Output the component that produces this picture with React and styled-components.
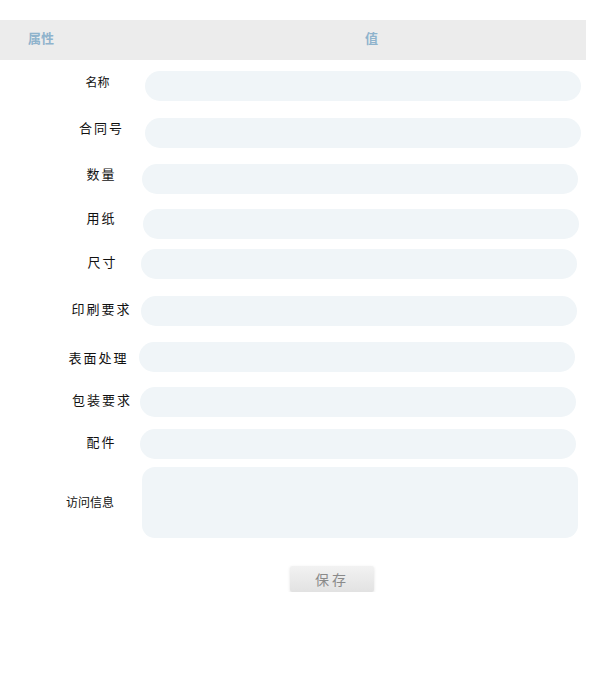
import styled, { createGlobalStyle } from 'styled-components';

const GlobalStyle = createGlobalStyle`
    body{
        margin:0;
        background:#fff;
        font-family:"Noto Sans CJK SC","Noto Sans",sans-serif;
    }
`

const Page = styled.div`
    width:586px;
    padding-top:20px;
`

const Header = styled.div`
    display:flex;
    align-items:center;
    height:40px;
    padding-bottom:5px;
    box-sizing:border-box;
    background:#ececec;
    font-size:13px;
    font-weight:bold;
    color:#8fb3cc;
`

const HeadCell = styled.div`
    width:${p=>p.$w}px;
    padding-left:${p=>p.$pad}px;
    box-sizing:border-box;
`

const Row = styled.div`
    display:flex;
    align-items:${p=>p.$center?"center":"flex-start"};
    margin-top:${p=>p.$top}px;
`

const Label = styled.div`
    width:140px;
    padding-left:${p=>p.$indent}px;
    padding-top:${p=>p.$drop}px;
    padding-bottom:${p=>p.$center?3:0}px;
    box-sizing:border-box;
    text-align:center;
    font-size:${p=>p.$plain?12:13}px;
    line-height:17px;
    color:#111;
    letter-spacing:${p=>p.$plain?"0":"2px"};
    white-space:nowrap;
`

const Field = styled.input`
    display:block;
    width:436px;
    height:30px;
    margin-left:${p=>p.$shift}px;
    border:none;
    border-radius:15px;
    background:#f0f5f8;
    outline:none;
    padding:0 12px;
    box-sizing:border-box;
`

const Area = styled.textarea`
    display:block;
    width:436px;
    height:71px;
    margin-left:${p=>p.$shift}px;
    border:none;
    border-radius:13px;
    background:#f0f5f8;
    outline:none;
    resize:none;
    padding:8px 12px;
    box-sizing:border-box;
`

const Actions = styled.div`
    display:flex;
    padding-left:290px;
    margin-top:28px;
`

const SaveBtn = styled.button`
    width:84px;
    height:26px;
    border:none;
    border-radius:2px;
    background:linear-gradient(#f2f2f2,#e2e2e2);
    box-shadow:0 1px 3px rgba(0,0,0,0.12);
    color:#8a8a8a;
    font-family:"Noto Sans CJK SC",sans-serif;
    font-size:14px;
    letter-spacing:3px;
    padding:0;
`

const rows = [
    {label:"名称", top:11, shift:5, plain:true, drop:2, indent:55},
    {label:"合同号", top:17, shift:5, drop:1, indent:63},
    {label:"数量", top:16, shift:2, drop:1, indent:63},
    {label:"用纸", top:15, shift:3, drop:-1, indent:63},
    {label:"尺寸", top:10, shift:1, drop:4, indent:65},
    {label:"印刷要求", top:17, shift:1, drop:4, indent:63},
    {label:"表面处理", top:16, shift:-1, drop:7, indent:57},
    {label:"包装要求", top:15, shift:0, drop:4, indent:64},
    {label:"配件", top:12, shift:0, drop:4, indent:63},
]

export default function App(){
    return (
    <>
        <GlobalStyle />
        <Page>
            <Header>
                <HeadCell $w={140} $pad={28}>属性</HeadCell>
                <HeadCell $w={446} $pad={225}>值</HeadCell>
            </Header>
            {rows.map(r=>(
                <Row key={r.label} $top={r.top}>
                    <Label $plain={r.plain} $indent={r.indent} $drop={r.drop}>{r.label}</Label>
                    <Field $shift={r.shift} />
                </Row>
            ))}
            <Row $top={8} $center>
                <Label $plain $center $indent={40} $drop={0}>访问信息</Label>
                <Area $shift={2} />
            </Row>
            <Actions>
                <SaveBtn type="button">保存</SaveBtn>
            </Actions>
        </Page>
    </>
    );
}
